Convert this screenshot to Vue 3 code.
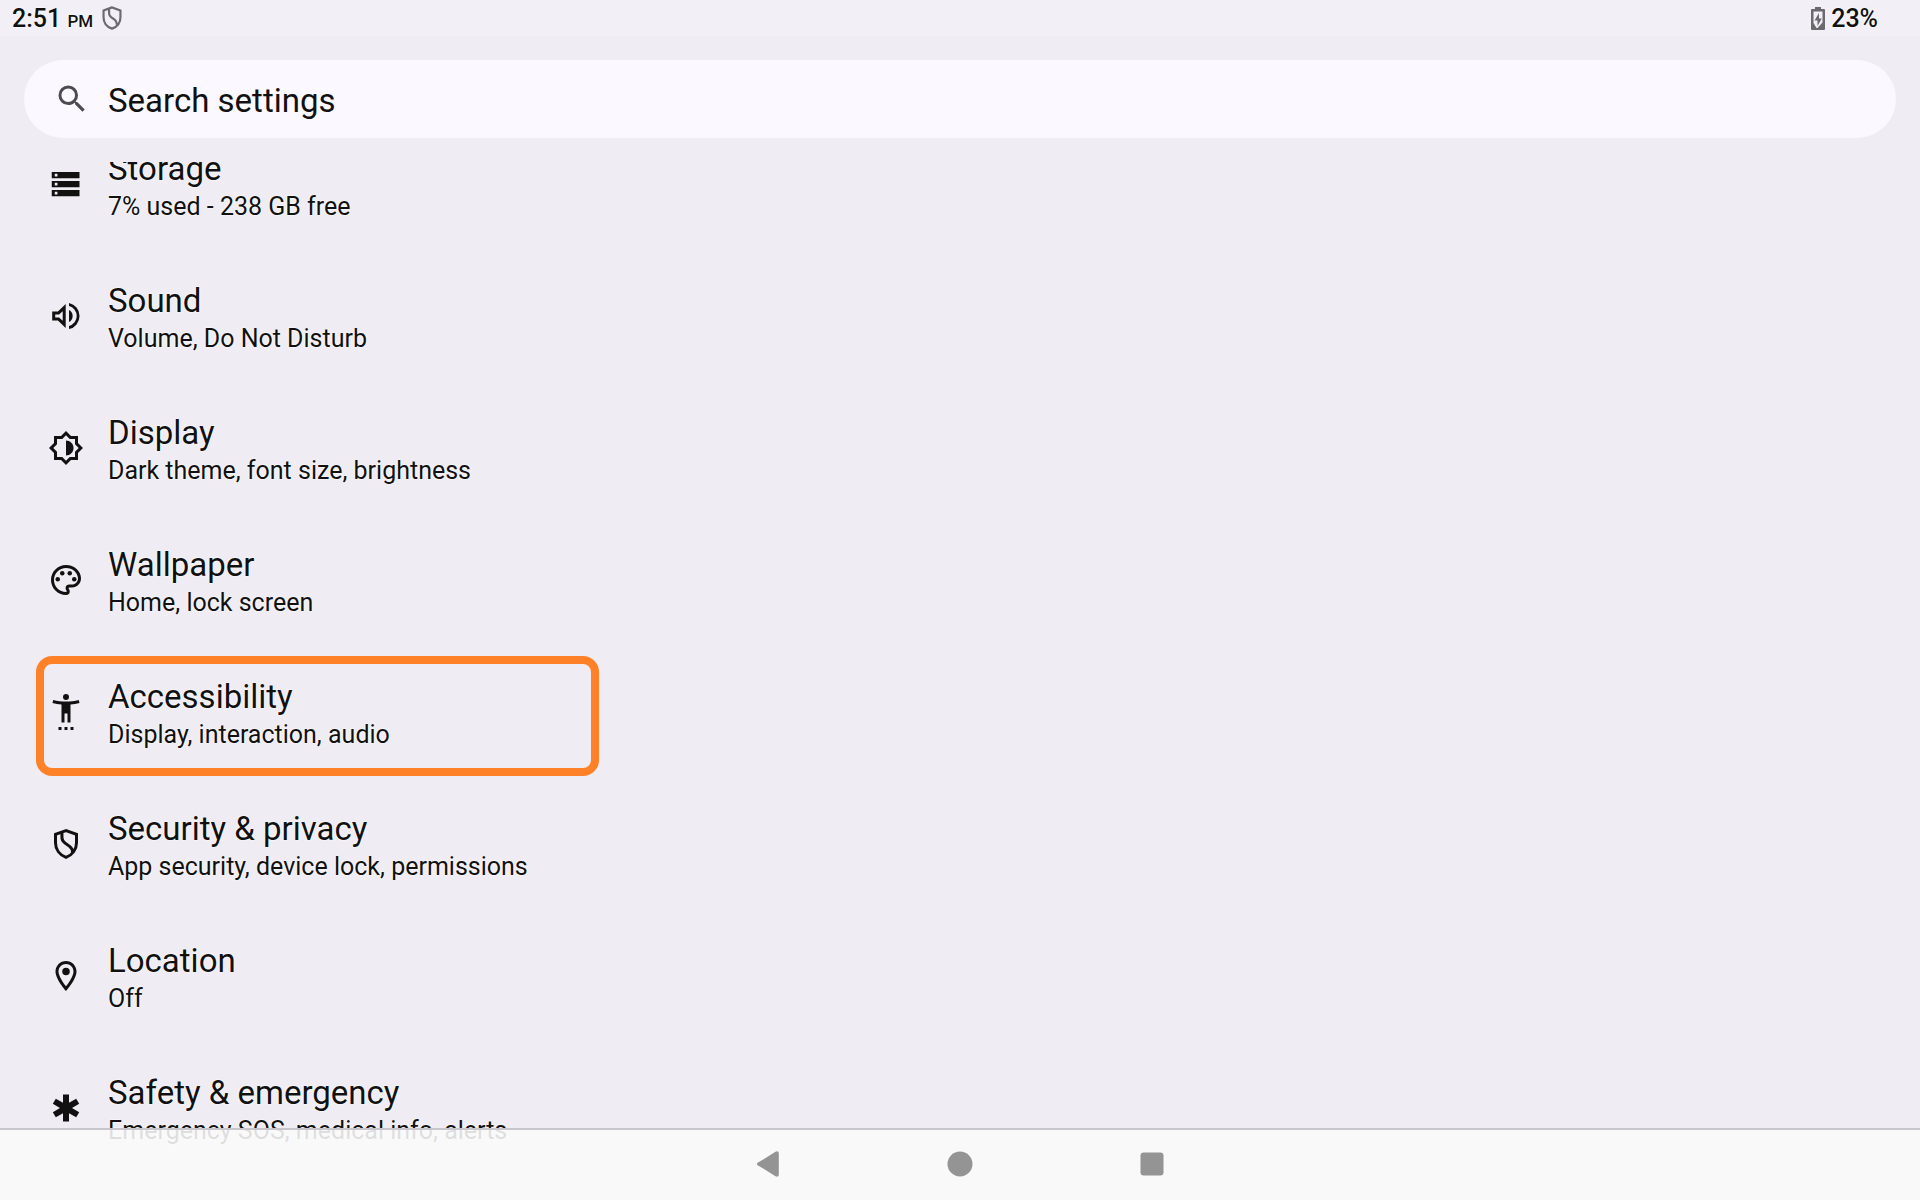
<script setup>
const items = [
  { id: 'storage', title: 'Storage', summary: '7% used - 238 GB free' },
  { id: 'sound', title: 'Sound', summary: 'Volume, Do Not Disturb' },
  { id: 'display', title: 'Display', summary: 'Dark theme, font size, brightness' },
  { id: 'wallpaper', title: 'Wallpaper', summary: 'Home, lock screen' },
  { id: 'accessibility', title: 'Accessibility', summary: 'Display, interaction, audio', marked: true },
  { id: 'security', title: 'Security & privacy', summary: 'App security, device lock, permissions' },
  { id: 'location', title: 'Location', summary: 'Off' },
  { id: 'safety', title: 'Safety & emergency', summary: 'Emergency SOS, medical info, alerts' }
]
</script>

<template>
  <div class="screen">
    <header class="status">
      <span class="clock">2:51 <small>PM</small></span>
      <svg class="status-shield" viewBox="0 0 24 24" aria-hidden="true">
        <path d="M12 2.2 4.2 5v6.2c0 4.8 3.1 8.900 7.800 10.600 4.700-1.700 7.800-5.800 7.800-10.600V5L12 2.200ZM9.300 3.500v4.200c0 1.600.7 2.700 2.100 3.700l3 2.200c1.400 1 2 2 2.100 4.600" />
      </svg>
      <span class="battery">
        <svg viewBox="0 0 14 24" aria-hidden="true">
          <path fill-rule="evenodd" d="M4 1h6v2h3a1 1 0 0 1 1 1v19a1 1 0 0 1-1 1H1a1 1 0 0 1-1-1V4a1 1 0 0 1 1-1h3V1ZM2.500 5.500V17l3 5h1l5-5.500v-11h-9Z" />
          <path d="M8 7 3.500 14.500h3V20l4.300-7.500H8V7Z" />
        </svg>
        23%
      </span>
    </header>

    <label class="search">
      <svg viewBox="0 0 24 24" aria-hidden="true">
        <path d="M15.500 14h-.79l-.28-.27A6.470 6.470 0 0 0 16 9.500 6.500 6.500 0 1 0 9.500 16c1.610 0 3.090-.59 4.230-1.570l.27.28v.79l5 4.990L20.490 19l-4.990-5zm-6 0C7.010 14 5 11.990 5 9.500S7.010 5 9.500 5 14 7.010 14 9.500 11.990 14 9.500 14z" />
      </svg>
      <input type="search" placeholder="Search settings" aria-label="Search settings" />
    </label>

    <main class="viewport">
      <ul class="list">
        <li v-for="item in items" :key="item.id">
          <a class="row" :class="{ marked: item.marked }" :href="'#' + item.id">
            <svg class="icon" viewBox="0 0 24 24" aria-hidden="true">
              <path v-if="item.id === 'storage'" fill-rule="evenodd" d="M2.500 4h18.500v4.200H2.500zM4.500 5.200v1.800h1.800V5.200zM2.500 10h18.500v4.200H2.500zM4.500 11.200v1.800h1.800v-1.800zM2.500 16h18.500v4.200H2.500zM4.500 17.200v1.800h1.800v-1.800z" />
              <template v-else-if="item.id === 'sound'">
                <path fill-rule="evenodd" d="M2.800 9v6h3.800l5.200 5V4L6.600 9H2.800Zm7-.2v6.400L7.400 13H4.800v-2h2.600l2.400-2.200Z" />
                <path d="M14 3.300v2.100a6.800 6.800 0 0 1 0 13.200v2.100a8.900 8.900 0 0 0 0-17.400ZM14 8v8a4.500 4.500 0 0 0 0-8Z" />
              </template>
              <template v-else-if="item.id === 'display'">
                <path d="M20 8.690V4h-4.690L12 .69 8.690 4H4v4.690L.69 12 4 15.310V20h4.690L12 23.310 15.310 20H20v-4.690L23.310 12 20 8.690zm-2 5.790V18h-3.520L12 20.480 9.520 18H6v-3.520L3.520 12 6 9.520V6h3.520L12 3.520 14.480 6H18v3.520L20.480 12 18 14.480z" />
                <path d="M12 7v10c2.760 0 5-2.240 5-5s-2.240-5-5-5z" />
              </template>
              <template v-else-if="item.id === 'wallpaper'">
                <path d="M12 22C6.490 22 2 17.510 2 12S6.490 2 12 2s10 4.040 10 9c0 3.310-2.690 6-6 6h-1.770c-.28 0-.5.22-.5.5 0 .12.050.23.130.33.410.47.640 1.060.640 1.670A2.500 2.500 0 0 1 12 22zm0-18c-4.410 0-8 3.590-8 8s3.590 8 8 8c.28 0 .5-.22.5-.5a.54.54 0 0 0-.14-.35c-.41-.46-.63-1.050-.63-1.650a2.500 2.500 0 0 1 2.500-2.500H16c2.210 0 4-1.790 4-4 0-3.860-3.590-7-8-7z" />
                <circle cx="6.500" cy="11.500" r="1.500" /><circle cx="9.500" cy="7.500" r="1.500" />
                <circle cx="14.500" cy="7.500" r="1.500" /><circle cx="17.500" cy="11.500" r="1.500" />
              </template>
              <path v-else-if="item.id === 'accessibility'" d="M20.500 4c-2.610.7-5.670 1-8.500 1s-5.890-.3-8.500-1L3 6c1.860.5 4 .83 6 1v12h2v-6h2v6h2V7c2-.17 4.140-.5 6-1l-.5-2zM12 4a2 2 0 1 0 0-4 2 2 0 0 0 0 4zM7 24h2v-2H7v2zm4 0h2v-2h-2v2zm4 0h2v-2h-2v2z" />
              <path v-else-if="item.id === 'security'" class="outline" d="M12 3.100 5 5.600v5.500c0 4.500 2.800 8.200 7 9.800 4.200-1.600 7-5.300 7-9.800V5.600L12 3.100ZM9.300 4.200v3.500c0 1.600.7 2.700 2.100 3.700l3 2.200c1.300 1 2 2 2 4.200" />
              <template v-else-if="item.id === 'location'">
                <path d="M12 2C8.130 2 5 5.130 5 9c0 5.250 7 13 7 13s7-7.750 7-13c0-3.870-3.130-7-7-7zM7 9c0-2.760 2.240-5 5-5s5 2.240 5 5c0 2.880-2.880 7.190-5 9.880C9.920 16.210 7 11.850 7 9z" />
                <circle cx="12" cy="9" r="2.500" />
              </template>
              <path v-else d="M20.790 9.230l-2-3.460L14 8.540V3h-4v5.540L5.210 5.770l-2 3.460L8 12l-4.790 2.770 2 3.460L10 15.460V21h4v-5.540l4.790 2.770 2-3.460L16 12z" />
            </svg>
            <span class="text">
              <span class="title">{{ item.title }}</span>
              <span class="summary">{{ item.summary }}</span>
            </span>
          </a>
        </li>
      </ul>
    </main>

    <nav class="navbar">
      <button type="button" aria-label="Back">
        <svg viewBox="0 0 26 26"><path d="M3 11.600 20.500.8Q23.500-.6 23.800 2v22q-.3 2.600-3.300 1.200L3 14.400q-2.300-1.400 0-2.800Z" /></svg>
      </button>
      <button type="button" aria-label="Home">
        <svg viewBox="0 0 26 26"><circle cx="13" cy="13" r="12.500" /></svg>
      </button>
      <button type="button" aria-label="Overview">
        <svg viewBox="0 0 26 26"><rect x="1.500" y="1.500" width="23" height="23" rx="3" /></svg>
      </button>
    </nav>
  </div>
</template>

<style>
body {
  background: #efecf3;
}
</style>

<style scoped>
.screen {
  position: relative;
  display: flex;
  flex-direction: column;
  height: 100vh;
  overflow: hidden;
  background: #efecf3;
  color: #111;
  font-family: Roboto, "Liberation Sans", sans-serif;
  text-shadow: 0 0 2px #fff, 0 0 2px #fff;
}
svg {
  display: block;
  flex: none;
  fill: currentColor;
}
.status {
  display: flex;
  align-items: center;
  flex: none;
  height: 36px;
  padding: 0 42px 0 12px;
  background: #f2eff7;
  font-size: 25px;
  font-weight: 500;
}
.clock small {
  font-size: 17px;
}
.status-shield {
  width: 26px;
  height: 26px;
  margin-left: 6px;
  fill: none;
  stroke: #6b6a6e;
  stroke-width: 2;
}
.battery {
  display: flex;
  align-items: center;
  gap: 6px;
  margin-left: auto;
}
.battery svg {
  width: 14px;
  height: 24px;
  fill: #6b6a6e;
}
.search {
  display: flex;
  align-items: center;
  flex: none;
  gap: 18px;
  height: 78px;
  margin: 24px 24px 0;
  padding: 0 30px;
  box-sizing: border-box;
  border-radius: 39px;
  background: #fbf9ff;
}
.search svg {
  width: 36px;
  height: 36px;
  color: #4c4b50;
}
.search input {
  flex: 1;
  min-width: 0;
  height: 42px;
  padding: 2px 0 0;
  border: 0;
  outline: 0;
  background: transparent;
  color: inherit;
  font: inherit;
  font-size: 33px;
  text-shadow: none;
}
.search input::placeholder {
  color: #111;
  opacity: 1;
}
.viewport {
  flex: 1;
  min-height: 0;
  margin-top: 24px;
  overflow: hidden;
}
.list {
  margin: -44px 0 0;
  padding: 0;
  list-style: none;
}
.row {
  position: relative;
  display: flex;
  align-items: center;
  gap: 24px;
  height: 132px;
  padding: 0 48px;
  color: inherit;
  text-decoration: none;
}
.row.marked::after {
  content: "";
  position: absolute;
  top: 10px;
  left: 36px;
  width: 563px;
  height: 120px;
  box-sizing: border-box;
  border: 8px solid #ff8127;
  border-radius: 16px;
}
.icon {
  width: 36px;
  height: 36px;
}
.outline {
  fill: none;
  stroke: currentColor;
  stroke-width: 2;
}
.text {
  display: flex;
  flex-direction: column;
  padding-top: 4px;
}
.title {
  font-size: 33px;
  line-height: 42px;
}
.summary {
  font-size: 25px;
  line-height: 34px;
}
.navbar {
  position: absolute;
  right: 0;
  bottom: 0;
  left: 0;
  display: flex;
  justify-content: center;
  height: 72px;
  box-shadow: inset 0 2px #c8c6cc;
  background: rgba(251, 251, 251, 0.88);
}
.navbar button {
  display: flex;
  align-items: center;
  justify-content: center;
  width: 192px;
  padding: 0;
  border: 0;
  background: transparent;
  color: #949494;
}
.navbar svg {
  width: 26px;
  height: 26px;
}
</style>
